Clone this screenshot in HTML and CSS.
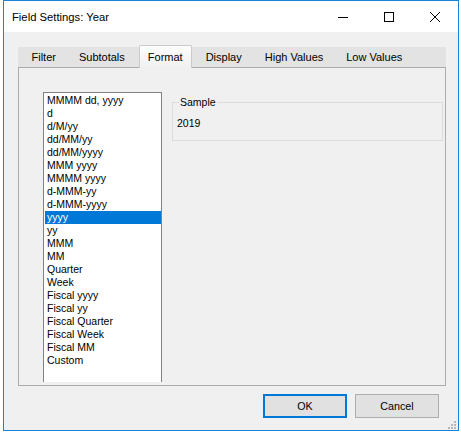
FILE: index.html
```html
<!DOCTYPE html>
<html>
<head>
<meta charset="utf-8">
<link rel="stylesheet" href="styles.css">
</head>
<body>
<div class="window">
  <div class="titlebar">
    <span class="title">Field Settings: Year</span>
    <div class="controls">
      <span class="ctl"><svg width="10" height="10" viewBox="0 0 10 10"><path d="M0 5.5h10" stroke="#000" stroke-width="1"/></svg></span>
      <span class="ctl"><svg width="10" height="10" viewBox="0 0 10 10"><rect x="0.5" y="0.5" width="9" height="9" fill="none" stroke="#000" stroke-width="1"/></svg></span>
      <span class="ctl"><svg width="10" height="10" viewBox="0 0 10 10"><path d="M0 0L10 10M10 0L0 10" stroke="#000" stroke-width="1"/></svg></span>
    </div>
  </div>
  <div class="content">
    <div class="tabs">
      <span class="tab">Filter</span>
      <span class="tab">Subtotals</span>
      <span class="tab active">Format</span>
      <span class="tab">Display</span>
      <span class="tab">High Values</span>
      <span class="tab">Low Values</span>
    </div>
    <div class="panel">
      <div class="listbox">
        <div class="item">MMMM dd, yyyy</div>
        <div class="item">d</div>
        <div class="item">d/M/yy</div>
        <div class="item">dd/MM/yy</div>
        <div class="item">dd/MM/yyyy</div>
        <div class="item">MMM yyyy</div>
        <div class="item">MMMM yyyy</div>
        <div class="item">d-MMM-yy</div>
        <div class="item">d-MMM-yyyy</div>
        <div class="item selected">yyyy</div>
        <div class="item">yy</div>
        <div class="item">MMM</div>
        <div class="item">MM</div>
        <div class="item">Quarter</div>
        <div class="item">Week</div>
        <div class="item">Fiscal yyyy</div>
        <div class="item">Fiscal yy</div>
        <div class="item">Fiscal Quarter</div>
        <div class="item">Fiscal Week</div>
        <div class="item">Fiscal MM</div>
        <div class="item">Custom</div>
      </div>
      <fieldset class="sample">
        <legend class="sample-label">Sample</legend>
        <div class="sample-value">2019</div>
      </fieldset>
    </div>
    <div class="buttons">
      <button class="btn btn-default">OK</button>
      <button class="btn">Cancel</button>
    </div>
  </div>
  <svg class="grip" width="8" height="8" viewBox="0 0 8 8">
    <rect x="6" y="0" width="2" height="2" fill="#b8b8b8"/>
    <rect x="3" y="3" width="2" height="2" fill="#b8b8b8"/>
    <rect x="6" y="3" width="2" height="2" fill="#b8b8b8"/>
    <rect x="0" y="6" width="2" height="2" fill="#b8b8b8"/>
    <rect x="3" y="6" width="2" height="2" fill="#b8b8b8"/>
    <rect x="6" y="6" width="2" height="2" fill="#b8b8b8"/>
  </svg>
</div>
</body>
</html>
```
FILE: styles.css
```css
body {
  margin: 0;
  background: #ffffff;
  font-family: "Liberation Sans", Arial, sans-serif;
  color: #000;
}

.window {
  margin-left: 3px;
  width: 456px;
  height: 431px;
  box-sizing: border-box;
  border: 1px solid #1883d7;
  background: #f0f0f0;
  position: relative;
  display: flex;
  flex-direction: column;
}

.titlebar {
  flex: none;
  height: 31px;
  background: #ffffff;
  display: flex;
  align-items: center;
}

.title {
  flex: 1;
  padding-left: 8px;
  font-size: 11.25px;
}

.controls {
  display: flex;
  height: 100%;
}

.ctl {
  width: 46px;
  display: flex;
  align-items: center;
  justify-content: center;
}

.ctl svg {
  display: block;
}

.content {
  flex: 1;
  padding: 15px 0 0 14px;
}

.tabs {
  display: flex;
  width: 428px;
  height: 20px;
  box-sizing: border-box;
  padding-left: 2px;
  background: #e3e3e3;
  font-size: 11px;
  line-height: 20px;
}

.tab {
  padding: 0 11.5px;
  white-space: nowrap;
}

.tab.active {
  position: relative;
  z-index: 1;
  margin: -2px 2.5px -1px;
  padding: 1px 8px 0;
  border: 1px solid #cbcbcb;
  border-bottom: none;
  border-radius: 2px 2px 0 0;
  background: linear-gradient(#fdfdfd, #f0f0f0);
}

.panel {
  width: 428px;
  height: 319px;
  box-sizing: border-box;
  border: 1px solid #acacac;
  padding: 24px 0 0 24px;
  display: flex;
  align-items: flex-start;
}

.listbox {
  flex: none;
  width: 119px;
  height: 290px;
  box-sizing: border-box;
  border: 1px solid #828282;
  border-bottom: none;
  background: #ffffff;
  padding: 1px 0 0 1px;
  font-size: 10.5px;
  line-height: 13px;
  overflow: hidden;
}

.item {
  height: 13px;
  padding-left: 2px;
  white-space: nowrap;
}

.item.selected {
  background: #0078d7;
  color: #ffffff;
}

.sample {
  flex: none;
  margin: 3.5px 0 0 10px;
  width: 271px;
  min-width: 0;
  box-sizing: border-box;
  border: 1px solid #dcdcdc;
  padding: 8px 4px 10px;
  font-size: 10.5px;
  line-height: 13px;
}

.sample-label {
  margin-left: 2px;
  padding: 0 1px;
}

.buttons {
  display: flex;
  justify-content: flex-end;
  gap: 8px;
  margin-top: 8px;
  padding-right: 19px;
}

.btn {
  width: 84px;
  height: 24px;
  box-sizing: border-box;
  border: 1px solid #adadad;
  background: #e1e1e1;
  padding: 0;
  font-family: "Liberation Sans", Arial, sans-serif;
  font-size: 10.7px;
  color: #000;
}

.btn-default {
  border: 2px solid #0078d7;
}

.grip {
  position: absolute;
  right: 2px;
  bottom: 1px;
}
```
